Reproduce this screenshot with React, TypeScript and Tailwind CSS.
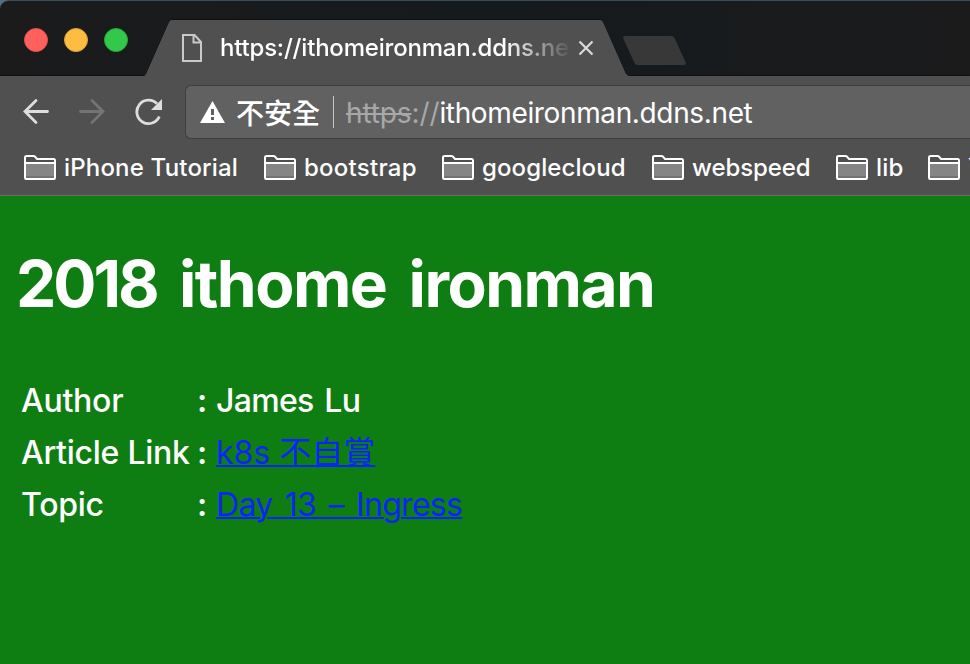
import { ReactNode } from 'react';

const bookmarks = [
  { name: 'iPhone Tutorial', width: 'w-[240px]', text: 'tracking-[0.18px]' },
  { name: 'bootstrap', width: 'w-[178px]', text: 'tracking-[0.25px]' },
  { name: 'googlecloud', width: 'w-[210px]', text: 'tracking-[0.1px]' },
  { name: 'webspeed', width: 'w-[184px]', text: 'tracking-[-0.1px]' },
  { name: 'lib', width: 'w-[92px]', text: 'tracking-[0.2px]' },
  { name: 'Y', width: 'w-[160px]', text: 'tracking-[0px]' },
];

function FolderIcon() {
  return (
    <svg className="h-[26px] w-8 shrink-0" viewBox="0 0 32 26" fill="none">
      <path d="M2 8h28v13H2z" fill="#858585" />
      <path d="M2 21h28v2H2z" fill="#737373" />
      <path d="M1 22.500V2.500Q1 1 2.500 1h7q1 0 1.700.8L13 4h16.500Q31 4 31 5.500v17q0 1.500-1 1.500H2q-1 0-1-1.500Z" stroke="#fff" strokeWidth="2" />
      <path d="M1 8h30" stroke="#fff" strokeWidth="2" />
    </svg>
  );
}

function TabStrip() {
  return (
    <div className="flex h-[76px] items-start overflow-hidden rounded-tl-[9px] border-t border-[#3a4d5a] bg-linear-to-r from-[#1b1b1c] via-[#151a1d] to-[#1b1b1c] shadow-[inset_0_-1px_0_#101112]">
      <div className="mt-[27px] ml-6 flex w-[120px] gap-4">
        <span className="size-6 rounded-full border border-[#e2504c] bg-[#fd605d]" />
        <span className="size-6 rounded-full border border-[#dea034] bg-[#fdbd41]" />
        <span className="size-6 rounded-full border border-[#27aa35] bg-[#34c84a]" />
      </div>

      {/* Active tab */}
      <div className="mt-[18px] h-[57px] w-[485px] shrink-0 bg-[#0f1112] pt-px [clip-path:polygon(0_100%,2px_96%,25px_2px,27px_0,457px_0,459px_2px,482px_96%,100%_100%)]">
        <div className="flex h-14 items-center bg-[#505050] pl-[37px] [clip-path:polygon(0_100%,2px_96%,25px_2px,27px_0,457px_0,459px_2px,482px_96%,100%_100%)]">
          <svg className="h-7 w-[21px] shrink-0" viewBox="0 0 21 28" fill="none" stroke="#c9c9c9" strokeWidth="2">
            <path d="M2 1h11.500L20 8v19H2z" />
            <path d="M12.500 1v7.500H20" />
          </svg>
          <div className="ml-[18px] w-[350px] overflow-hidden text-2xl font-medium tracking-[-0.2px] whitespace-nowrap text-white [mask-image:linear-gradient(to_right,#000_285px,transparent_352px)]">
            https://ithomeironman.ddns.ne
          </div>
          <svg className="ml-2 size-4 shrink-0" viewBox="0 0 16 16" stroke="#dadada" strokeWidth="2.200">
            <path d="M1.500 1.500l13 13M14.500 1.500l-13 13" />
          </svg>
        </div>
      </div>

      {/* New tab button */}
      <svg className="mt-[34px] -ml-[7px] h-[31px] w-16" viewBox="0 0 64 31">
        <path d="M3 1h46q2.500 0 3.500 2l11 24q1 3-1.500 3H16q-2.500 0-3.500-2L1.500 4Q.5 1 3 1Z" fill="#383838" />
      </svg>
    </div>
  );
}

function Toolbar() {
  return (
    <div className="flex h-[72px] items-center pl-[22px]">
      <svg className="size-7 shrink-0" viewBox="0 0 28 28" fill="none" stroke="#dedede" strokeWidth="2.800" strokeLinecap="round" strokeLinejoin="miter">
        <path d="M25.500 13.500H3M14 2.500l-11 11 11 11" />
      </svg>
      <svg className="ml-7 size-7 shrink-0" viewBox="0 0 28 28" fill="none" stroke="#747474" strokeWidth="2.800" strokeLinecap="round">
        <path d="M2.500 13.500H25M14 2.500l11 11-11 11" />
      </svg>
      <svg className="ml-7 size-7 shrink-0" viewBox="0 0 28 28" fill="none">
        <path d="M25.300 18.500A11.700 11.700 0 1 1 23 5.800" stroke="#dedede" strokeWidth="2.800" />
        <path d="M28 1v11H17z" fill="#dedede" />
      </svg>

      <div className="ml-[23px] flex h-[54px] flex-1 items-center rounded-l-md border border-r-0 border-[#3e3e3e] bg-[#616161] pl-3.5">
        <svg className="h-[22px] w-[25px] shrink-0" viewBox="0 0 25 22">
          <path d="M12.500 0L25 22H0z" fill="#fff" />
          <path d="M11 8h3v6h-3zM11 16h3v3h-3z" fill="#616161" />
        </svg>
        <span className="ml-[11px] w-[86px] font-['Noto_Sans_CJK_TC',sans-serif] text-[28px] leading-none font-medium whitespace-nowrap text-white">
          不安全
        </span>
        <span className="ml-[11px] h-8 w-px bg-[#c8c8c8]" />
        <span className="mt-0.5 ml-3 text-[28px] leading-none tracking-[-0.36px] whitespace-nowrap text-white">
          <span className="tracking-[-0.12px] text-[#a8a8a8]">
            <span className="line-through decoration-2">https</span>://
          </span>
          ithomeironman.ddns.net
        </span>
      </div>
    </div>
  );
}

function Row({ label, children }: { label: string; children: ReactNode }) {
  return (
    <div className="flex h-[52px] items-center">
      <span className="w-44 font-[450] tracking-[-0.25px]">{label}</span>
      <span className="w-[19px] font-semibold">:</span>
      {children}
    </div>
  );
}

export default function App() {
  return (
    <div className="h-[664px] w-[970px] overflow-hidden bg-[#507088] font-[Inter,'Noto_Sans_CJK_TC',sans-serif]">
      <TabStrip />
      <div className="h-[120px] border-b border-[#6b6b6b] bg-[#505050]">
        <Toolbar />
        {/* Bookmarks bar */}
        <div className="flex h-[39px] items-center overflow-hidden pl-6">
          {bookmarks.map((b) => (
            <div key={b.name} className={`flex shrink-0 items-center gap-2 ${b.width}`}>
              <FolderIcon />
              <span className={`text-2xl leading-none font-medium whitespace-nowrap text-white ${b.text}`}>{b.name}</span>
            </div>
          ))}
        </div>
      </div>

      <div className="h-[468px] bg-[#0f7e12] pt-[49px] text-[32px] text-white">
        <h1 className="ml-4 text-[64px] leading-[78px] font-[650] tracking-[-1.500px] whitespace-nowrap [word-spacing:8.500px]">
          <span className="tracking-[-3px]">2018</span> ithome ironman
        </h1>
        <div className="mt-[52px] ml-[21px] whitespace-nowrap">
          <Row label="Author">
            <span className="font-[450] tracking-[-0.700px] [word-spacing:3px]">James Lu</span>
          </Row>
          <Row label="Article Link">
            <a className="text-[#0b24fb] underline decoration-2">k8s 不自賞</a>
          </Row>
          <Row label="Topic">
            <a className="tracking-[-0.700px] text-[#0b24fb] underline decoration-2 [word-spacing:4px]">Day 13 – Ingress</a>
          </Row>
        </div>
      </div>
    </div>
  );
}
